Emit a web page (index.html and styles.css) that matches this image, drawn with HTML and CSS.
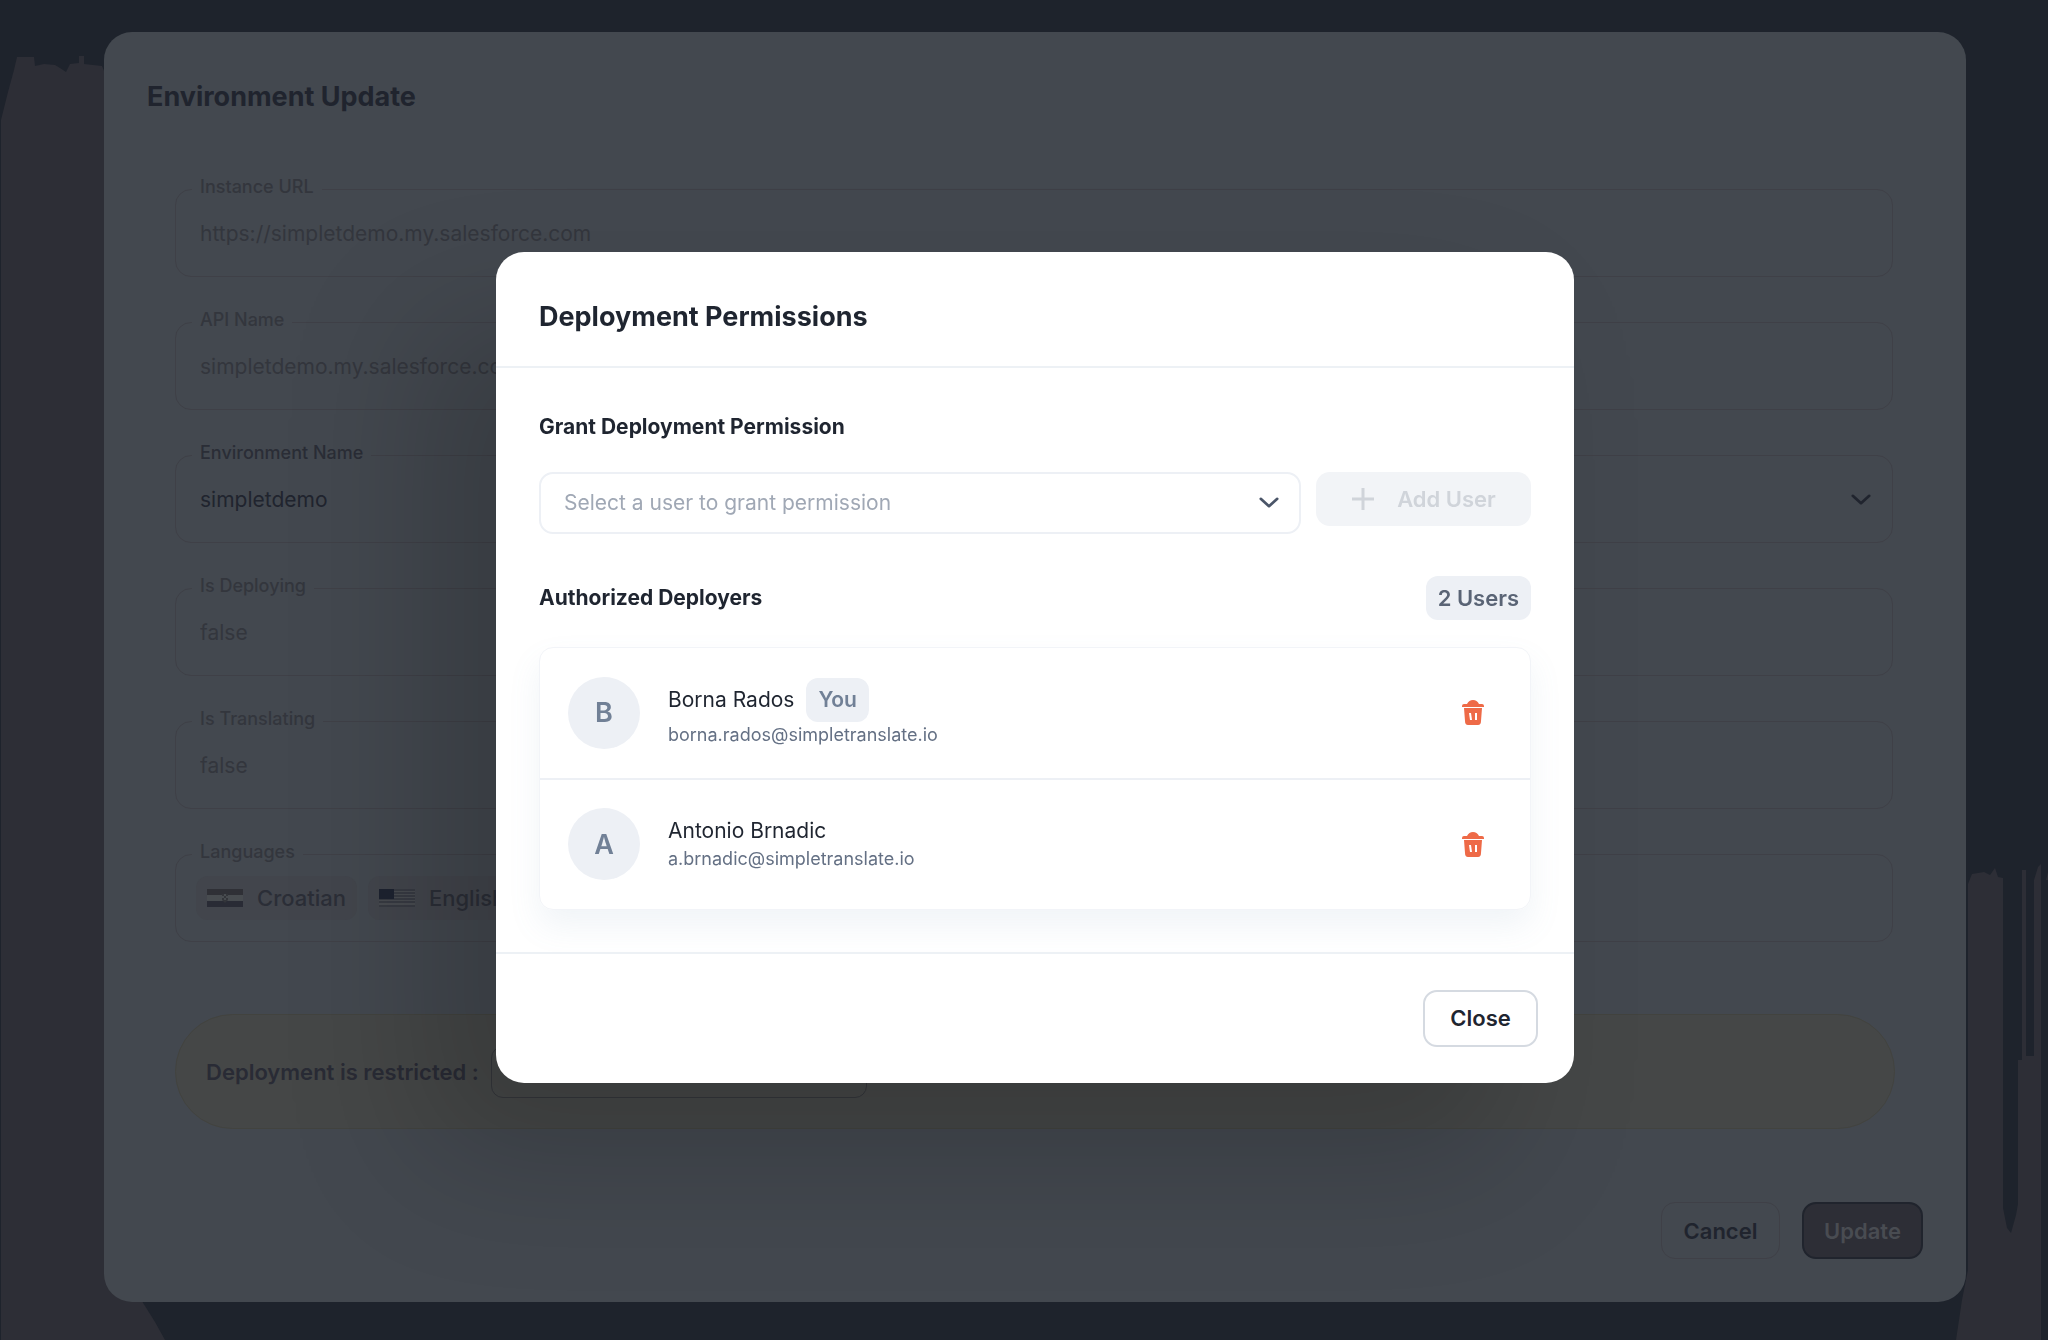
FILE: index.html
```html
<!DOCTYPE html>
<html lang="en">
<head>
  <meta charset="utf-8">
  <meta name="viewport" content="width=device-width, initial-scale=1">
  <title>Environment Update</title>
  <link rel="stylesheet" href="styles.css">
</head>
<body>
  <svg class="backdrop" viewBox="0 0 2048 1340" preserveAspectRatio="none" aria-hidden="true">
    <path d="M1 1340V120L8 92L14 70L17 57H34L35 66L44 64L55 65L60 68L66 72L70 64L79 63V56H84V64L102 66L112 90V1258L120 1275L140 1298L155 1322L165 1340Z"/>
    <path d="M1969 1340H1956L1962 1300L1968 1270V884L1972 874L1984 872L1990 875L1995 868L1998 877L2003 878V1208L2007 1228L2011 1233L2016 1215L2018 1204V1060H2022V870H2026V1056H2034V880L2038 867L2041 864V1340Z"/>
    <path d="M2046 880L2048 872V880Z"/>
  </svg>

  <div class="page">
    <main class="dialog" aria-labelledby="env-title">
      <h1 class="dialog-title" id="env-title">Environment Update</h1>

      <form class="env-form">
        <div class="fields">
          <fieldset class="field">
            <legend><label for="instance-url">Instance URL</label></legend>
            <input class="field-control" id="instance-url" type="text" value="https://simpletdemo.my.salesforce.com" disabled>
          </fieldset>
          <fieldset class="field">
            <legend><label for="api-name">API Name</label></legend>
            <input class="field-control" id="api-name" type="text" value="simpletdemo.my.salesforce.com" disabled>
          </fieldset>
          <fieldset class="field field-active">
            <legend><label for="env-name">Environment Name</label></legend>
            <div class="select-row">
              <select class="field-control" id="env-name"><option>simpletdemo</option></select>
              <svg class="chevron" viewBox="0 0 24 14" aria-hidden="true"><path d="M3 3L12 11L21 3"/></svg>
            </div>
          </fieldset>
          <fieldset class="field">
            <legend><label for="is-deploying">Is Deploying</label></legend>
            <input class="field-control" id="is-deploying" type="text" value="false" disabled>
          </fieldset>
          <fieldset class="field">
            <legend><label for="is-translating">Is Translating</label></legend>
            <input class="field-control" id="is-translating" type="text" value="false" disabled>
          </fieldset>
          <fieldset class="field">
            <legend>Languages</legend>
            <ul class="languages">
              <li class="language">
                <svg class="flag" viewBox="0 0 36 18" aria-hidden="true">
                  <rect width="36" height="6" fill="#2f3036"/>
                  <rect y="6" width="36" height="6" fill="#484c50"/>
                  <rect y="12" width="36" height="6" fill="#292b35"/>
                  <path d="M15 5h6v6l-3 3l-3-3z" fill="#33353a"/>
                  <path d="M15 7h2v2h-2zM19 7h2v2h-2zM17 9h2v2h-2zM17 5h2v2h-2z" fill="#484c50"/>
                </svg>
                Croatian
              </li>
              <li class="language">
                <svg class="flag" viewBox="0 0 36 18" aria-hidden="true">
                  <rect width="36" height="18" fill="#484b50"/>
                  <path d="M0 1h36M0 4h36M0 7h36M0 10h36M0 13h36M0 17h36" stroke="#262a34" stroke-width="1"/>
                  <rect width="15" height="10" fill="#1d2230"/>
                </svg>
                English
              </li>
            </ul>
          </fieldset>
        </div>

        <div class="restriction">
          <label for="restriction-mode">Deployment is restricted :</label>
          <select class="restriction-select" id="restriction-mode"><option></option></select>
        </div>

        <div class="actions">
          <button class="button button-quiet" type="button">Cancel</button>
          <button class="button button-dark" type="submit">Update</button>
        </div>
      </form>

      <div class="overlay">
        <section class="modal" role="dialog" aria-modal="true" aria-labelledby="perm-title">
          <header class="modal-header">
            <h2 id="perm-title">Deployment Permissions</h2>
          </header>

          <div class="modal-body">
            <h3><label for="grant-user">Grant Deployment Permission</label></h3>
            <div class="grant-row">
              <div class="user-select">
                <select id="grant-user"><option>Select a user to grant permission</option></select>
                <svg class="chevron" viewBox="0 0 24 14" aria-hidden="true"><path d="M3 3L12 11L21 3"/></svg>
              </div>
              <button class="add-user" type="button" disabled>
                <svg class="plus" viewBox="0 0 24 24" aria-hidden="true"><path d="M12 1V23M1 12H23"/></svg>
                Add User
              </button>
            </div>

            <div class="list-heading">
              <h3>Authorized Deployers</h3>
              <span class="badge count">2 Users</span>
            </div>

            <ul class="users">
              <li class="user">
                <span class="avatar">B</span>
                <div class="user-text">
                  <div class="user-name">Borna Rados <span class="badge you">You</span></div>
                  <div class="user-email">borna.rados@simpletranslate.io</div>
                </div>
                <button class="remove" type="button" aria-label="Remove Borna Rados">
                  <svg viewBox="0 0 22 25" aria-hidden="true">
                    <path fill-rule="evenodd" d="M0 6Q0 4 2 4H5Q7 0 11 0Q15 0 17 4H20Q22 4 22 6V7H0ZM2 8H20L19 21Q19 25 16 25H6Q3 25 3 21ZM7 13L8 20H10L9 13ZM13 13L13 20H15L15 13Z"/>
                  </svg>
                </button>
              </li>
              <li class="user">
                <span class="avatar">A</span>
                <div class="user-text">
                  <div class="user-name">Antonio Brnadic</div>
                  <div class="user-email">a.brnadic@simpletranslate.io</div>
                </div>
                <button class="remove" type="button" aria-label="Remove Antonio Brnadic">
                  <svg viewBox="0 0 22 25" aria-hidden="true">
                    <path fill-rule="evenodd" d="M0 6Q0 4 2 4H5Q7 0 11 0Q15 0 17 4H20Q22 4 22 6V7H0ZM2 8H20L19 21Q19 25 16 25H6Q3 25 3 21ZM7 13L8 20H10L9 13ZM13 13L13 20H15L15 13Z"/>
                  </svg>
                </button>
              </li>
            </ul>
          </div>

          <footer class="modal-footer">
            <button class="button button-outline" type="button">Close</button>
          </footer>
        </section>
      </div>
    </main>
  </div>
</body>
</html>
```
FILE: styles.css
```css
*,
*::before,
*::after {
  box-sizing: border-box;
}

body {
  margin: 0;
  background: #1e232c;
  color: #1f2530;
  font-family: Inter, "Liberation Sans", sans-serif;
  font-size: 21px;
}

h1, h2, h3, ul {
  margin: 0;
  padding: 0;
}

ul {
  list-style: none;
}

button, input, select {
  font: inherit;
  color: inherit;
}

select {
  appearance: none;
}

/* Brush strokes behind everything */
.backdrop {
  position: fixed;
  inset: 0;
  z-index: -1;
  width: 100%;
  height: 100%;
  fill: #2d2e36;
}

.page {
  padding: 32px 82px 38px 104px;
}

/* Environment dialog, dimmed while the modal is open */
.dialog {
  position: relative;
  padding: 45px 43px 43px;
  border-radius: 28px;
  background: #43484f;
  color: #20242e;
}

.dialog-title,
.modal-header h2 {
  font-size: 27px;
  font-weight: 700;
  line-height: 40px;
}

.fields {
  display: grid;
  gap: 32px;
  margin: 59px 30px 0 28px;
}

.field {
  min-width: 0;
  margin: 0;
  padding: 0 24px;
  border: 1px solid #3f4047;
  border-radius: 16px;
  color: #33363d;
}

.field legend {
  margin-left: -8px;
  padding: 0 8px 4px;
  font-size: 18px;
  font-weight: 500;
  line-height: 22px;
}

.field-active {
  color: #20242e;
}

.field-active legend {
  color: #2a2d36;
}

.field-control {
  display: block;
  flex: 1;
  width: 100%;
  height: 74px;
  padding: 0 0 12px;
  border: 0;
  background: none;
}

.select-row {
  display: flex;
  align-items: center;
}

.chevron {
  flex: none;
  width: 22px;
  height: 13px;
  fill: none;
  stroke: currentColor;
  stroke-width: 3;
  stroke-linecap: round;
  stroke-linejoin: round;
}

.field .chevron {
  margin: 0 -4px 12px 0;
}

.languages {
  display: flex;
  gap: 11px;
  height: 74px;
  margin-left: -4px;
}

.language {
  display: flex;
  align-items: center;
  gap: 14px;
  height: 44px;
  margin-top: 9px;
  padding: 0 11px;
  border-radius: 12px;
  background: #42454c;
  color: #2b2e37;
  font-size: 22px;
  font-weight: 500;
}

.flag {
  width: 36px;
  height: 18px;
}

.restriction {
  display: flex;
  align-items: center;
  gap: 12px;
  height: 115px;
  margin: 72px 28px 0;
  padding: 0 30px;
  border: 1px solid #42433f;
  border-radius: 58px;
  background: #454747;
  color: #292b35;
  font-size: 22px;
  font-weight: 600;
}

.restriction-select {
  width: 376px;
  height: 52px;
  border: 1px solid #34363b;
  border-radius: 12px;
  background: none;
}

.actions {
  display: flex;
  justify-content: flex-end;
  gap: 22px;
  margin-top: 73px;
}

.button {
  height: 57px;
  padding: 0;
  border: 1px solid;
  border-radius: 14px;
  font-size: 22px;
  font-weight: 600;
}

.button-quiet {
  width: 119px;
  border-color: #3f4047;
  background: none;
  color: #20242e;
}

.button-dark {
  width: 121px;
  border: 2px solid #20242d;
  background: #2d2e36;
  color: #494c52;
}

.button-outline {
  width: 115px;
  border: 2px solid #d5dae1;
  background: #fff;
  color: #1f2530;
}

/* Permissions modal */
.overlay {
  position: absolute;
  inset: 0;
  display: grid;
  place-items: center;
  padding: 0 32px;
}

.modal {
  width: 100%;
  max-width: 1078px;
  border-radius: 28px;
  background: #fff;
  color: #1f2530;
  box-shadow: -72px 72px 140px rgba(0, 0, 0, 0.18);
}

.modal-header {
  padding: 45px 43px 29px;
  border-bottom: 2px solid #edf1f5;
}

.modal-body {
  padding: 45px 43px 42px;
}

.modal-body h3 {
  font-size: 21px;
  font-weight: 700;
  line-height: 28px;
}

.grant-row {
  display: flex;
  align-items: flex-start;
  gap: 15px;
  margin-top: 31px;
}

.user-select {
  display: flex;
  flex: 1;
  align-items: center;
  height: 62px;
  padding: 0 19px 0 23px;
  border: 2px solid #edf0f5;
  border-radius: 14px;
  color: #4a5568;
}

.user-select select {
  flex: 1;
  min-width: 0;
  height: 58px;
  padding: 0;
  border: 0;
  background: none;
  color: #a0a8b5;
}

.add-user {
  display: flex;
  align-items: center;
  justify-content: center;
  gap: 22px;
  width: 215px;
  height: 54px;
  padding: 0;
  border: 0;
  border-radius: 14px;
  background: #f2f4f7;
  color: #d0d4da;
  font-size: 22px;
  font-weight: 600;
}

.plus {
  width: 24px;
  height: 24px;
  fill: none;
  stroke: currentColor;
  stroke-width: 3;
}

.list-heading {
  display: flex;
  align-items: center;
  justify-content: space-between;
  margin: 42px 0 27px;
}

.badge {
  display: inline-flex;
  align-items: center;
  height: 44px;
  padding: 0 12px;
  border-radius: 12px;
  background: #edf0f5;
  font-weight: 600;
}

.count {
  color: #5a6475;
  font-size: 22px;
}

.you {
  color: #718096;
}

.users {
  border: 1px solid #f2f4f8;
  border-radius: 14px;
  box-shadow: 0 16px 32px rgba(112, 144, 176, 0.1);
}

.user {
  display: flex;
  align-items: center;
  gap: 28px;
  height: 130px;
  padding: 0 27px 0 28px;
}

.user + .user {
  height: 131px;
  border-top: 2px solid #edf0f5;
}

.avatar {
  display: grid;
  place-items: center;
  width: 72px;
  height: 72px;
  border-radius: 50%;
  background: #edf0f5;
  color: #718096;
  font-size: 27px;
  font-weight: 600;
}

.user-text {
  flex: 1;
}

.user-name {
  display: flex;
  align-items: center;
  gap: 12px;
  line-height: 30px;
}

.user-email {
  color: #647084;
  font-size: 18px;
  line-height: 26px;
}

.remove {
  display: grid;
  place-items: center;
  width: 60px;
  height: 60px;
  padding: 0;
  border: 0;
  background: none;
}

.remove svg {
  width: 22px;
  height: 25px;
  fill: #ee6a47;
}

.modal-footer {
  display: flex;
  justify-content: flex-end;
  padding: 36px;
  border-top: 2px solid #edf1f5;
}
```
